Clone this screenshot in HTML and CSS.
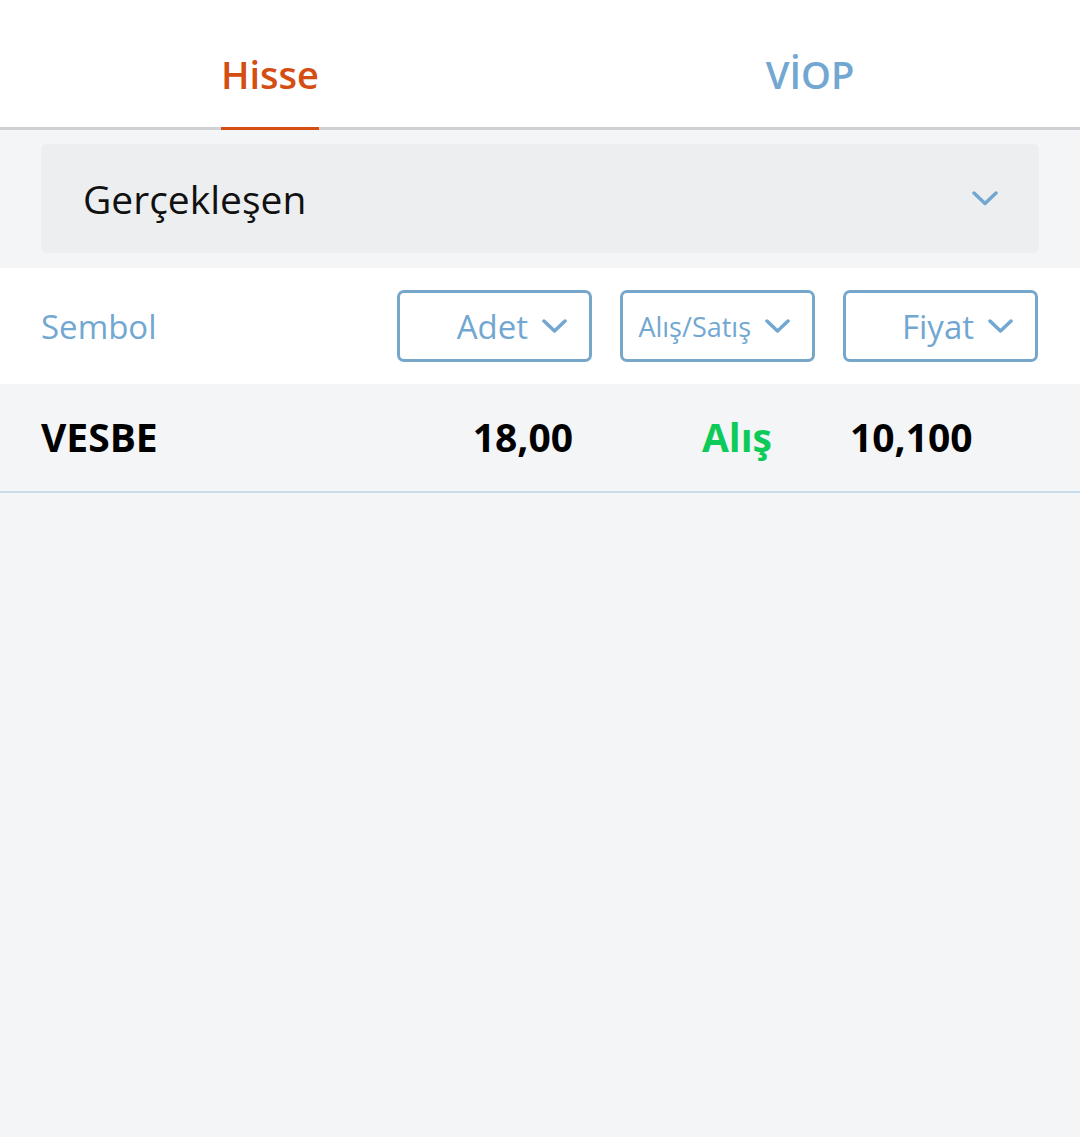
FILE: index.html
```html
<html>
<head>
<meta charset="utf-8">
<link rel="stylesheet" href="styles.css">
</head>
  <body>
    <div class="tabs">
      <div class="tab"><span class="tab-label active">Hisse</span></div>
      <div class="tab"><span class="tab-label">VİOP</span></div>
    </div>

    <div class="filter-area">
      <div class="select">
        <span>Gerçekleşen</span>
        <svg class="chev" width="26" height="15" viewBox="0 0 26 15"><polyline points="2,2 13,12.5 24,2" /></svg>
      </div>
    </div>

    <div class="cols">
      <div class="col-name">Sembol</div>
      <div class="sort-btn">
        <span>Adet</span>
        <svg class="chev" width="25" height="14" viewBox="0 0 25 14"><polyline points="2,2 12.5,12 23,2" /></svg>
      </div>
      <div class="sort-btn small">
        <span>Alış/Satış</span>
        <svg class="chev" width="25" height="14" viewBox="0 0 25 14"><polyline points="2,2 12.5,12 23,2" /></svg>
      </div>
      <div class="sort-btn">
        <span>Fiyat</span>
        <svg class="chev" width="25" height="14" viewBox="0 0 25 14"><polyline points="2,2 12.5,12 23,2" /></svg>
      </div>
    </div>

    <div class="row">
      <div class="cell sym">VESBE</div>
      <div class="cell qty">18,00</div>
      <div class="cell side buy">Alış</div>
      <div class="cell price">10,100</div>
    </div>
  </body>
</html>
```

FILE: styles.css
```css
html, body {
    margin: 0;
    height: 100%;
}

body {
    background: #f4f5f7;
    font-family: "Open Sans", "Noto Sans", sans-serif;
}

/* top tabs */
.tabs {
    display: flex;
    height: 127px;
    background: #fff;
    border-bottom: 3px solid #d0d1d4;
}

.tab {
    flex: 1;
    display: flex;
    justify-content: center;
}

.tab-label {
    display: flex;
    align-items: center;
    height: 107px;
    padding-top: 20px;
    margin-bottom: -3px;
    border-bottom: 3px solid transparent;
    font-size: 38px;
    font-weight: 600;
    color: #72a7d1;
    box-sizing: content-box;
}

.tab-label.active {
    color: #d44d13;
    border-bottom-color: #d44d13;
}

/* filter select */
.filter-area {
    padding: 14px 41px 15px;
}

.select {
    display: flex;
    align-items: center;
    justify-content: space-between;
    height: 109px;
    padding: 0 41px 0 42px;
    background: #edeef0;
    border-radius: 6px;
    font-size: 39px;
    color: #111;
}

.chev polyline {
    fill: none;
    stroke: #72a7d1;
    stroke-width: 3.5;
    stroke-linecap: round;
    stroke-linejoin: round;
}

/* column headers */
.cols {
    display: grid;
    grid-template-columns: 1fr 195px 195px 195px;
    column-gap: 28px;
    align-items: center;
    height: 116px;
    padding: 0 42px 0 41px;
    background: #fff;
}

.col-name {
    font-size: 33px;
    color: #72a7d1;
}

.sort-btn {
    display: flex;
    align-items: center;
    justify-content: flex-end;
    gap: 14px;
    height: 66px;
    padding: 0 22px 0 8px;
    border: 3px solid #77a6cb;
    border-radius: 7px;
    font-size: 33px;
    color: #72a7d1;
}

.sort-btn.small {
    font-size: 27px;
    padding-left: 10px;
}

/* data row */
.row {
    display: grid;
    grid-template-columns: 1fr 195px 195px 195px;
    column-gap: 28px;
    align-items: center;
    height: 107px;
    padding: 0 42px 0 41px;
    border-bottom: 2px solid #c6dbec;
    font-size: 39px;
    font-weight: 700;
    color: #000;
}

.row .cell {
    margin-top: -3px;
}

.qty {
    text-align: right;
    padding-right: 19px;
}

.side {
    text-align: right;
    padding-right: 43px;
}

.buy {
    color: #0ccb59;
}

.price {
    padding-left: 7px;
}
```
